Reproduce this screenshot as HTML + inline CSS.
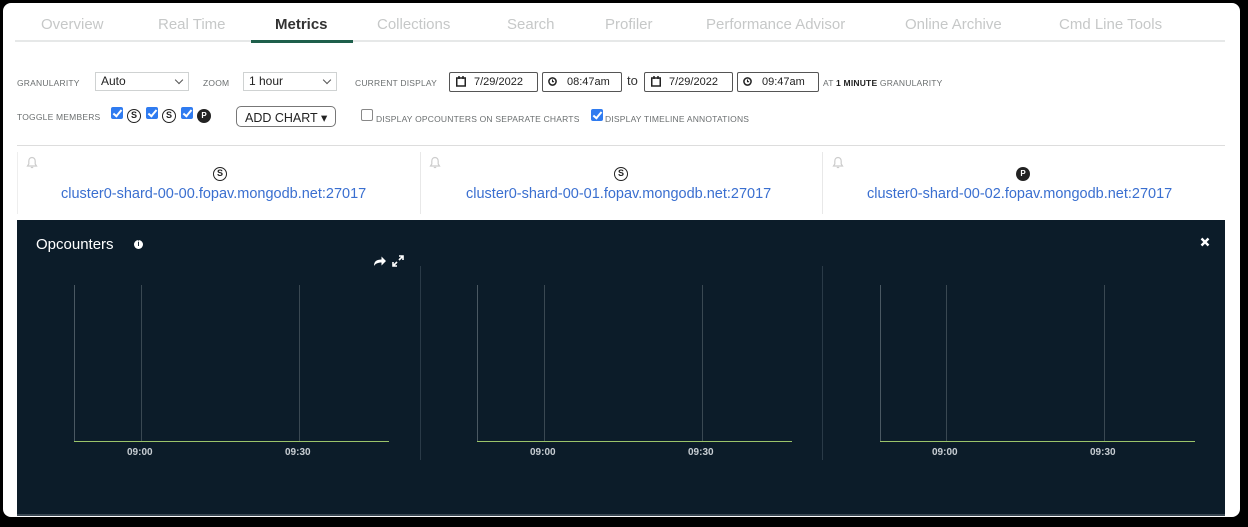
<!DOCTYPE html>
<html><head><meta charset="utf-8"><style>
*{box-sizing:border-box;margin:0;padding:0}
body{width:1248px;height:527px;background:#000;font-family:"Liberation Sans",sans-serif;position:relative;overflow:hidden}
.card{position:absolute;left:3px;top:3px;width:1237px;height:514px;background:#fff;border-radius:8px;overflow:hidden}
.a{position:absolute}
.tab{position:absolute;top:16px;font-size:15px;color:#c6c8c8;white-space:nowrap}
.lbl{position:absolute;font-size:8.5px;color:#6b6f70;letter-spacing:.2px;white-space:nowrap}
.sel{position:absolute;height:19px;border:1px solid #cfd2d2;font-size:12px;color:#222;padding:1px 5px;background:#fff}
.sel:after{content:"";position:absolute;right:6px;top:4px;width:5px;height:5px;border-right:1px solid #555;border-bottom:1px solid #555;transform:rotate(45deg)}
.inp{position:absolute;height:20px;border:1px solid #555;border-radius:2px;font-size:11px;color:#222;padding:3px 0 0 24px;background:#fff}
.cb{position:absolute;width:12px;height:12px;background:#2f7bf0;border-radius:2px}
.cb:after{content:"";position:absolute;left:4px;top:1px;width:3px;height:7px;border-right:2px solid #fff;border-bottom:2px solid #fff;transform:rotate(40deg)}
.ring{position:absolute;width:14px;height:14px;border:1.5px solid #222;border-radius:50%;font-size:9px;font-weight:bold;text-align:center;line-height:11px;color:#222}
.pdot{position:absolute;width:14px;height:14px;background:#222;border-radius:50%;font-size:8px;font-weight:bold;text-align:center;line-height:14px;color:#fff}
.link{position:absolute;top:186px;font-size:14.5px;color:#3a6fd0;white-space:nowrap}
.vl{position:absolute;width:1px}
.xl{position:absolute;top:447px;font-size:10px;font-weight:bold;color:#c8ced3}
.bell{position:absolute;top:156px}
</style></head><body>
<div class="card">
<div style="position:absolute;left:0;top:0;width:1237px;height:514px;transform:translate(-3px,-3px)">
<span class="tab" style="left:41px">Overview</span>
<span class="tab" style="left:158px">Real Time</span>
<span class="tab" style="left:275px;color:#333;font-weight:bold">Metrics</span>
<span class="tab" style="left:377px">Collections</span>
<span class="tab" style="left:507px">Search</span>
<span class="tab" style="left:605px">Profiler</span>
<span class="tab" style="left:706px">Performance Advisor</span>
<span class="tab" style="left:905px">Online Archive</span>
<span class="tab" style="left:1059px">Cmd Line Tools</span>
<div class="a" style="left:15px;top:40px;width:1210px;height:2px;background:#e6e8e8"></div>
<div class="a" style="left:251px;top:40px;width:102px;height:3px;background:#1e5f4b"></div>

<span class="lbl" style="left:17px;top:78px">GRANULARITY</span>
<div class="sel" style="left:95px;top:72px;width:94px">Auto</div>
<span class="lbl" style="left:203px;top:78px">ZOOM</span>
<div class="sel" style="left:243px;top:72px;width:94px">1 hour</div>
<span class="lbl" style="left:355px;top:78px">CURRENT DISPLAY</span>
<div class="inp" style="left:449px;top:72px;width:89px">7/29/2022</div>
<div class="inp" style="left:542px;top:72px;width:80px">08:47am</div>
<span class="a" style="left:627px;top:73px;font-size:13px;color:#333">to</span>
<div class="inp" style="left:644px;top:72px;width:89px">7/29/2022</div>
<div class="inp" style="left:737px;top:72px;width:82px">09:47am</div>
<svg class="a" style="left:456px;top:76px" width="10" height="11" viewBox="0 0 10 11"><rect x="0.75" y="2" width="8.5" height="8" fill="none" stroke="#222" stroke-width="1.5"/><path d="M3 0v3M7 0v3" stroke="#222" stroke-width="1.5"/></svg>
<svg class="a" style="left:651px;top:76px" width="10" height="11" viewBox="0 0 10 11"><rect x="0.75" y="2" width="8.5" height="8" fill="none" stroke="#222" stroke-width="1.5"/><path d="M3 0v3M7 0v3" stroke="#222" stroke-width="1.5"/></svg>
<svg class="a" style="left:548px;top:77px" width="9" height="9" viewBox="0 0 9 9"><circle cx="4.5" cy="4.5" r="3.6" fill="none" stroke="#222" stroke-width="1.5"/><path d="M4.5 2.5v2.2h1.6" fill="none" stroke="#222" stroke-width="1.1"/></svg>
<svg class="a" style="left:743px;top:77px" width="9" height="9" viewBox="0 0 9 9"><circle cx="4.5" cy="4.5" r="3.6" fill="none" stroke="#222" stroke-width="1.5"/><path d="M4.5 2.5v2.2h1.6" fill="none" stroke="#222" stroke-width="1.1"/></svg>
<span class="lbl" style="left:823px;top:78px">AT <b style="color:#222">1 MINUTE</b> GRANULARITY</span>

<span class="lbl" style="left:17px;top:112px">TOGGLE MEMBERS</span>
<div class="cb" style="left:111px;top:107px"></div>
<div class="ring" style="left:127px;top:109px">S</div>
<div class="cb" style="left:146px;top:107px"></div>
<div class="ring" style="left:162px;top:109px">S</div>
<div class="cb" style="left:181px;top:107px"></div>
<div class="pdot" style="left:197px;top:109px">P</div>
<div class="a" style="left:236px;top:106px;width:100px;height:21px;border:1px solid #777;border-radius:5px;font-size:12.5px;color:#222;padding:3px 0 0 8px">ADD CHART &#9662;</div>
<div class="a" style="left:361px;top:109px;width:12px;height:12px;border:1px solid #888;border-radius:2px"></div>
<span class="lbl" style="left:376px;top:114px">DISPLAY OPCOUNTERS ON SEPARATE CHARTS</span>
<div class="cb" style="left:591px;top:109px"></div>
<span class="lbl" style="left:605px;top:114px">DISPLAY TIMELINE ANNOTATIONS</span>

<div class="a" style="left:17px;top:145px;width:1208px;height:1px;background:#ddd"></div>
<div class="a" style="left:17px;top:152px;width:1px;height:62px;background:#eee"></div>
<div class="a" style="left:420px;top:152px;width:1px;height:62px;background:#e8e8e8"></div>
<div class="a" style="left:822px;top:152px;width:1px;height:62px;background:#e8e8e8"></div>
<svg class="bell" style="left:26px" width="12" height="13" viewBox="0 0 12 13"><path d="M6 1.5C3.8 1.5 2.8 3.2 2.8 5.2V8L1.5 10h9L9.2 8V5.2C9.2 3.2 8.2 1.5 6 1.5z" fill="none" stroke="#ccc" stroke-width="1.2"/><path d="M4.8 11.5h2.4" stroke="#ccc" stroke-width="1.2"/></svg>
<svg class="bell" style="left:429px" width="12" height="13" viewBox="0 0 12 13"><path d="M6 1.5C3.8 1.5 2.8 3.2 2.8 5.2V8L1.5 10h9L9.2 8V5.2C9.2 3.2 8.2 1.5 6 1.5z" fill="none" stroke="#ccc" stroke-width="1.2"/><path d="M4.8 11.5h2.4" stroke="#ccc" stroke-width="1.2"/></svg>
<svg class="bell" style="left:832px" width="12" height="13" viewBox="0 0 12 13"><path d="M6 1.5C3.8 1.5 2.8 3.2 2.8 5.2V8L1.5 10h9L9.2 8V5.2C9.2 3.2 8.2 1.5 6 1.5z" fill="none" stroke="#ccc" stroke-width="1.2"/><path d="M4.8 11.5h2.4" stroke="#ccc" stroke-width="1.2"/></svg>
<div class="ring" style="left:213px;top:167px">S</div>
<div class="ring" style="left:614px;top:167px">S</div>
<div class="pdot" style="left:1016px;top:167px">P</div>
<span class="link" style="left:61px">cluster0-shard-00-00.fopav.mongodb.net:27017</span>
<span class="link" style="left:466px">cluster0-shard-00-01.fopav.mongodb.net:27017</span>
<span class="link" style="left:867px">cluster0-shard-00-02.fopav.mongodb.net:27017</span>

<div class="a" style="left:17px;top:220px;width:1208px;height:296px;background:#0c1c29;border-bottom:2px solid #3a4752"></div>
<span class="a" style="left:36px;top:236px;font-size:15px;color:#fff">Opcounters</span>
<div class="a" style="left:134px;top:240px;width:9px;height:9px;border-radius:50%;background:#fff;font-size:7px;font-weight:bold;text-align:center;line-height:9px;color:#0c1c29">i</div>
<svg class="a" style="left:373px;top:255px" width="14" height="12" viewBox="0 0 14 12"><path d="M1 11C1 6 4 4.5 8.5 4.5V1.5L13 6 8.5 10.5V7.5C5 7.5 2.5 8.5 1 11z" fill="#fff"/></svg>
<svg class="a" style="left:392px;top:255px" width="12" height="12" viewBox="0 0 12 12"><path d="M7 1h4v4M5 11H1V7M11 1L7 5M1 11l4-4" fill="none" stroke="#fff" stroke-width="1.6"/></svg>
<svg class="a" style="left:1200px;top:237px" width="10" height="10" viewBox="0 0 10 10"><path d="M1.5 1.5l7 7M8.5 1.5l-7 7" stroke="#fff" stroke-width="2.4"/></svg>

<div class="vl" style="left:420px;top:266px;height:194px;background:#2a3a47"></div>
<div class="vl" style="left:822px;top:266px;height:194px;background:#2a3a47"></div>

<div class="vl" style="left:74px;top:285px;height:157px;background:#4a5862"></div>
<div class="vl" style="left:141px;top:285px;height:157px;background:#3a4852"></div>
<div class="vl" style="left:299px;top:285px;height:157px;background:#3a4852"></div>
<div class="a" style="left:74px;top:441px;width:315px;height:1px;background:#9bc46a"></div>
<span class="xl" style="left:127px">09:00</span><span class="xl" style="left:285px">09:30</span>

<div class="vl" style="left:477px;top:285px;height:157px;background:#4a5862"></div>
<div class="vl" style="left:544px;top:285px;height:157px;background:#3a4852"></div>
<div class="vl" style="left:702px;top:285px;height:157px;background:#3a4852"></div>
<div class="a" style="left:477px;top:441px;width:315px;height:1px;background:#9bc46a"></div>
<span class="xl" style="left:530px">09:00</span><span class="xl" style="left:688px">09:30</span>

<div class="vl" style="left:880px;top:285px;height:157px;background:#4a5862"></div>
<div class="vl" style="left:946px;top:285px;height:157px;background:#3a4852"></div>
<div class="vl" style="left:1104px;top:285px;height:157px;background:#3a4852"></div>
<div class="a" style="left:880px;top:441px;width:315px;height:1px;background:#9bc46a"></div>
<span class="xl" style="left:932px">09:00</span><span class="xl" style="left:1090px">09:30</span>
</div>
</div>
</body></html>
